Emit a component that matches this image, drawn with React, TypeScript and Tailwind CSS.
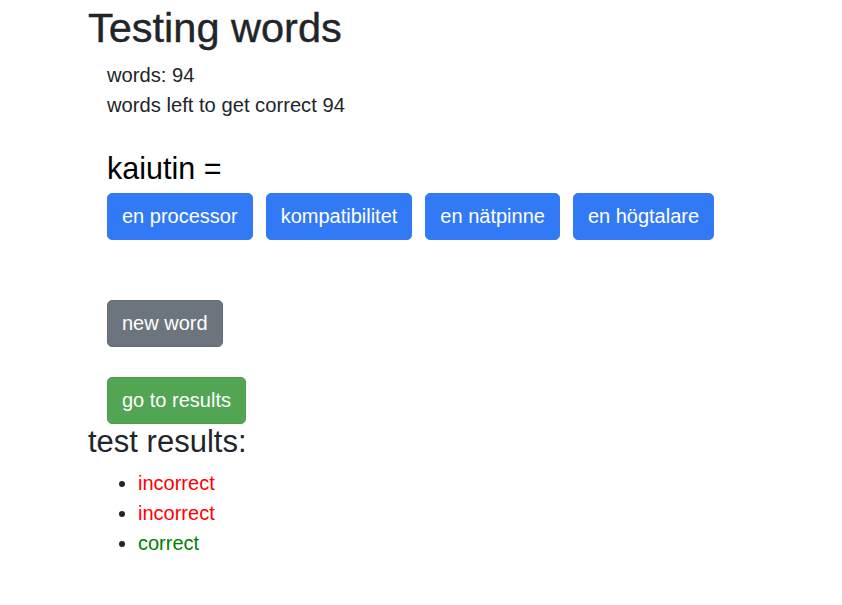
const choices = ['en processor', 'kompatibilitet', 'en nätpinne', 'en högtalare']

const results = [
  { label: 'incorrect', ok: false },
  { label: 'incorrect', ok: false },
  { label: 'correct', ok: true },
]

export default function App() {
  return (
    <div className="min-h-screen bg-white text-[#212529] font-['Liberation_Sans',Arial,sans-serif] pl-[88px] pt-[4px]">
      <h1 className="text-[41.5px] leading-[48px] mb-2 [-webkit-text-stroke:0.4px_#212529]">Testing words</h1>
      <div className="pl-[19px]">
        <div className="text-[20.2px] leading-[30px]">words: 94</div>
        <div className="text-[20.2px] leading-[30px]">words left to get correct 94</div>

        <h2 className="text-[30.5px] leading-[1.2] mt-[30px] mb-[6px] text-black">kaiutin =</h2>
        <div className="flex gap-[13px]">
          {choices.map(c => (
            <button
              key={c}
              className="bg-[#3279f6] border border-[#3279f6] text-white text-[20px] leading-[29px] py-2 px-[14px] rounded-[5px]"
            >
              {c}
            </button>
          ))}
        </div>

        <div className="mt-[60px]">
          <button className="bg-[#6c757d] border border-[#626a72] text-white text-[20px] leading-[29px] py-2 px-[14px] rounded-[5px]">
            new word
          </button>
        </div>
        <div className="mt-[30px]">
          <button className="bg-[#52a552] border border-[#4d9c4d] text-white text-[20px] leading-[29px] py-2 px-[14px] rounded-[5px]">
            go to results
          </button>
        </div>
      </div>

      <h2 className="text-[31px] leading-[1.2] mb-2 -mt-[1px]">test results:</h2>
      <ul className="list-disc pl-[50px] text-[20px] leading-[30px] marker:text-[#212529]">
        {results.map((r, i) => (
          <li key={i} className={r.ok ? 'text-[#008000]' : 'text-[#ff0000]'}>
            {r.label}
          </li>
        ))}
      </ul>
    </div>
  )
}
